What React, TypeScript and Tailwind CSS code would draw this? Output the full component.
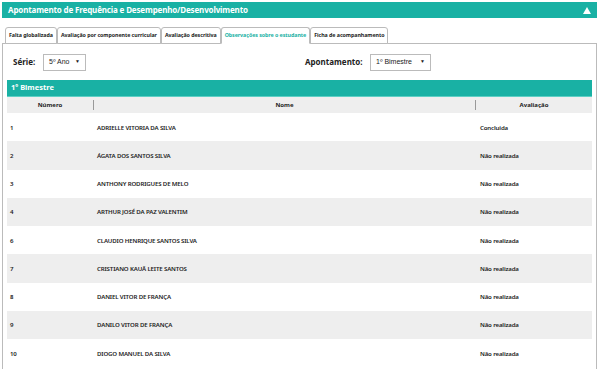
import React from "react";

const rows = [
  ["1", "ADRIELLE VITORIA DA SILVA", "Concluida"],
  ["2", "ÁGATA DOS SANTOS SILVA", "Não realizada"],
  ["3", "ANTHONY RODRIGUES DE MELO", "Não realizada"],
  ["4", "ARTHUR JOSÉ DA PAZ VALENTIM", "Não realizada"],
  ["6", "CLAUDIO HENRIQUE SANTOS SILVA", "Não realizada"],
  ["7", "CRISTIANO KAUÃ LEITE SANTOS", "Não realizada"],
  ["8", "DANIEL VITOR DE FRANÇA", "Não realizada"],
  ["9", "DANILO VITOR DE FRANÇA", "Não realizada"],
  ["10", "DIOGO MANUEL DA SILVA", "Não realizada"],
];

const tabs = [
  "Falta globalizada",
  "Avaliação por componente curricular",
  "Avaliação descritiva",
  "Observações sobre o estudante",
  "Ficha de acompanhamento",
];

export default function App() {
  return (
    <div
      className="w-[600px] h-[369px] bg-white overflow-hidden pt-[2px] pl-[2px] pr-[3px] text-[#222]"
      style={{ fontFamily: '"Noto Sans", "Open Sans", sans-serif' }}
    >
      <div className="h-[16px] bg-[#19b1a4] flex items-center justify-between pl-[6px] pr-[6px] text-white font-bold text-[8px] tracking-[-0.15px]">
        <span>Apontamento de Frequência e Desempenho/Desenvolvimento</span>
        <svg width="8" height="7" viewBox="0 0 8 7">
          <path d="M4 0 L8 7 L0 7 Z" fill="white" />
        </svg>
      </div>
      <div className="mt-[9px] h-[17px] flex items-end pl-[3px] border-b border-[#bbb]">
        {tabs.map((t, i) => (
          <div
            key={t}
            className={
              "h-[17px] px-[3px] flex items-center border border-[#bbb] rounded-t-[3px] text-[5.3px] font-bold tracking-[-0.05px] -mb-px " +
              (i === 3 ? "text-[#19b1a4] border-b-white bg-white" : "bg-white")
            }
          >
            {t}
          </div>
        ))}
      </div>
      <div className="border-l border-r border-[#bbb] px-[4px] h-[330px]">
        <div className="h-[36px] flex items-center">
          <span className="ml-[6px] text-[8px] font-bold w-[30px]">Série:</span>
          <div className="h-[17px] w-[43px] border border-[#bbb] flex items-center pl-[5px] text-[7px]">
            <span style={{ fontFamily: '"Liberation Sans", sans-serif' }}>5º Ano</span>
            <span className="ml-auto mr-[5px] text-[5px]">▼</span>
          </div>
          <span className="ml-[219px] text-[8px] font-bold w-[65px]">Apontamento:</span>
          <div className="h-[17px] w-[61px] border border-[#bbb] flex items-center pl-[5px] text-[7px]">
            <span style={{ fontFamily: '"Liberation Sans", sans-serif' }}>1º Bimestre</span>
            <span className="ml-auto mr-[5px] text-[5px]">▼</span>
          </div>
        </div>
        <div className="h-[17px] bg-[#19b1a4] flex items-center pl-[4px] text-white font-bold text-[7.5px] border-b border-[#5ccfc4]">
          1º Bimestre
        </div>
        <div className="h-[16px] bg-[#eeeeee] flex items-center text-[6px] font-bold">
          <div className="w-[87px] text-center border-r border-[#999] leading-[10px]">Número</div>
          <div className="w-[382px] text-center border-r border-[#999] leading-[10px]">Nome</div>
          <div className="flex-1 text-center">Avaliação</div>
        </div>
        {rows.map((r, i) => (
          <div
            key={r[0]}
            className={
              "h-[28.25px] flex items-center text-[6.1px] font-semibold tracking-[-0.15px] " +
              (i % 2 === 1 ? "bg-[#eeeeee]" : "bg-white")
            }
          >
            <div className="w-[90px] pl-[3px]">{r[0]}</div>
            <div className="w-[383px]">{r[1]}</div>
            <div className="flex-1">{r[2]}</div>
          </div>
        ))}
      </div>
    </div>
  );
}
